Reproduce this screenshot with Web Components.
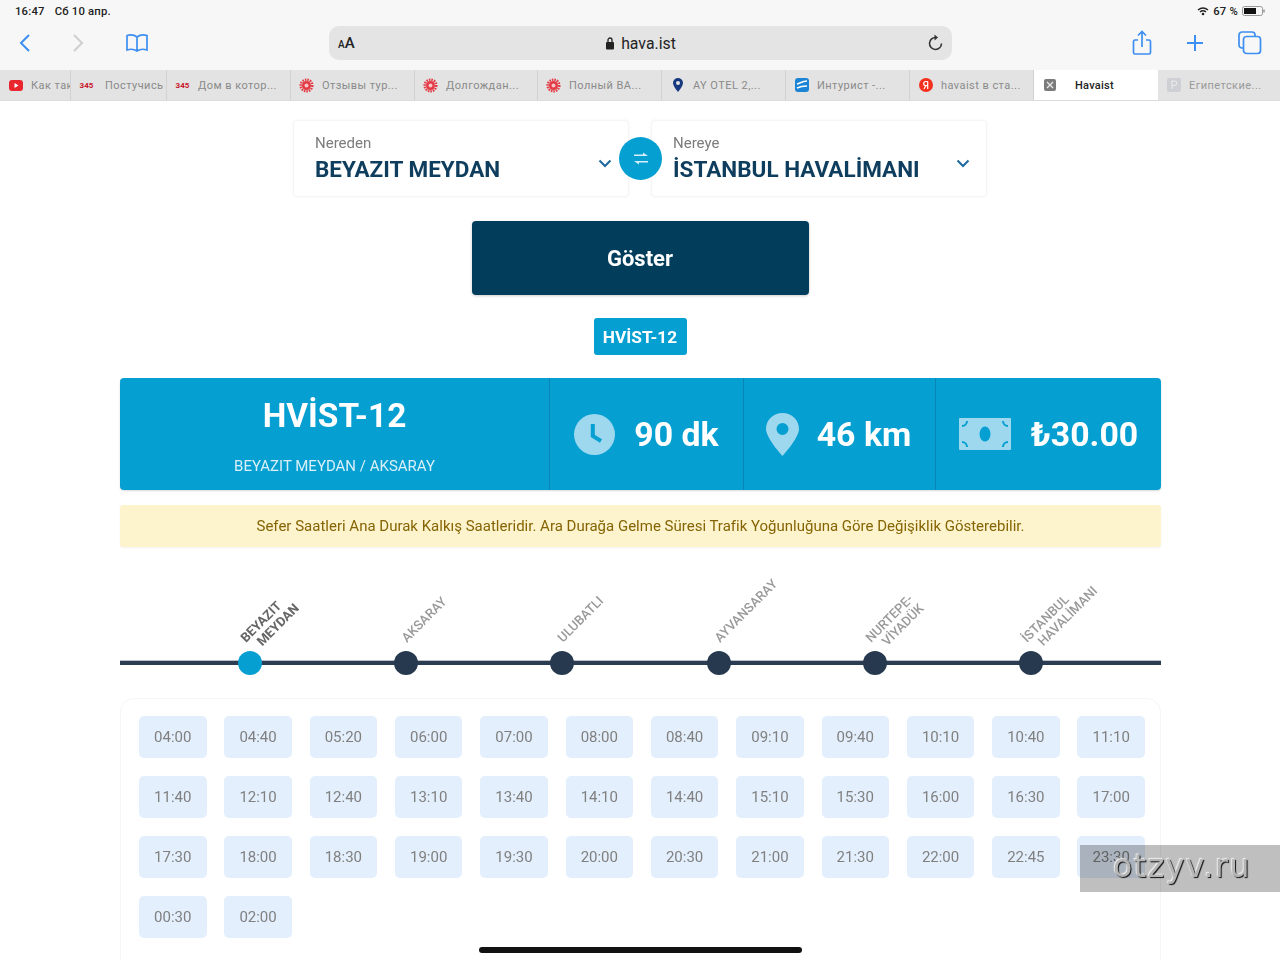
<!doctype html>
<html lang="tr"><head><meta charset="utf-8"><title>Havaist</title>
<style>
html,body{margin:0;height:960px;overflow:hidden;background:#fff;font-family:Roboto,"Liberation Sans",sans-serif}
body{display:block;position:relative}
.page{filter:blur(.76px);height:960px;overflow:hidden}
.wm{position:absolute;left:1080px;top:845px}
</style></head><body>
<div class="page">
<browser-chrome></browser-chrome>
<route-form></route-form>
<route-banner></route-banner>
<stop-line></stop-line>
<time-grid></time-grid>
<home-bar></home-bar>
</div>
<water-mark class="wm">otzyv.ru</water-mark>
<script>
const def=(name,html,init)=>customElements.define(name,class extends HTMLElement{
  constructor(){super();this.attachShadow({mode:'open'}).innerHTML=html;}
  connectedCallback(){init&&init(this.shadowRoot,this);}
});
const BLUE='#3d8ff2';
def('browser-tab',`<style>
:host{display:flex;align-items:center;box-sizing:border-box;height:30px;border-right:1px solid #d2d2d2;background:#e3e3e3;color:#8a8a8a;font-size:11px;letter-spacing:.45px;padding-left:8px;gap:8px;overflow:hidden;white-space:nowrap;flex:0 0 auto}
:host([active]){background:#fff;color:#222;font-weight:500;border-right:0;gap:18px;letter-spacing:.25px}
:host([last]){border-right:0;color:#999}
.i{width:15px;height:15px;flex:0 0 15px;display:flex;align-items:center;justify-content:center}
</style><span class="i"><slot name="icon"></slot></span><slot></slot>`);
def('browser-chrome',`<style>
:host{display:block;background:#f7f7f7;height:101px;color:#222}
.st{height:22px;display:flex;justify-content:space-between;align-items:center;font-size:11.300px;font-weight:500;padding:0 13px 0 15px;letter-spacing:.2px}
.st div{display:flex;align-items:center;gap:10px}.r{gap:4px!important}
.tb{height:42px;margin-bottom:6px;position:relative;display:flex;align-items:center}
.left{display:flex;align-items:center;width:329px;box-sizing:border-box;padding-left:18px;gap:39px}
.url{width:623px;height:34px;background:#e4e4e4;border-radius:10px;display:grid;grid-template-columns:1fr auto 1fr;align-items:center;box-sizing:border-box;padding:0 8px;font-size:15.800px}
.url .aa{font-size:15px;font-weight:500;margin-left:1px}.url .aa small{font-size:10px}
.url .mid{display:flex;align-items:center;gap:6px;margin-left:0}
.url svg.re{justify-self:end}
.right{display:flex;align-items:center;margin-left:180px}
.tabs{display:flex;height:31px;border-bottom:1px solid #dcdcdc;box-sizing:border-box}
.t345{color:#c8152a;font:700 8px Roboto,sans-serif;letter-spacing:0}
</style>
<div class="st"><div><span>16:47</span><span>Сб 10 апр.</span></div>
<div class="r"><svg width="12" height="10" viewBox="0 0 12 10"><path d="M1 4q5-4 10 0M3 6q3-2.500 6 0" fill="none" stroke="#222" stroke-width="1.500"/><circle cx="6" cy="8" r="1.300" fill="#222"/></svg><span>67 %</span>
<svg width="25" height="12" viewBox="0 0 25 12"><rect x=".5" y="1.500" width="20" height="9" rx="2" fill="none" stroke="#999"/><rect x="2" y="3" width="12" height="6" fill="#111"/><path d="M22 4.500v3" stroke="#999" stroke-width="1.500"/></svg></div></div>
<div class="tb"><div class="left">
<svg width="14" height="20" viewBox="0 0 14 20"><path d="M11 2 3 10l8 8" fill="none" stroke="${BLUE}" stroke-width="2"/></svg>
<svg width="14" height="20" viewBox="0 0 14 20"><path d="M3 2l8 8-8 8" fill="none" stroke="#cfcfcf" stroke-width="2"/></svg>
<svg width="24" height="20" viewBox="0 0 24 20" style="margin-left:1px"><path d="M12 4C9 1.500 5 1.500 2 2.500V17c3-1 7-1 10 1 3-2 7-2 10-1V2.500C19 1.500 15 1.500 12 4zM12 4v14" fill="none" stroke="${BLUE}" stroke-width="1.700"/></svg></div>
<div class="url"><span class="aa"><small>A</small>A</span><span class="mid"><svg width="10" height="13" viewBox="0 0 10 13"><rect x="1" y="5" width="8" height="7.500" rx="1" fill="#222"/><path d="M3 5V3a2 2 0 0 1 4 0v2" fill="none" stroke="#222" stroke-width="1.300"/></svg>hava.ist</span>
<svg class="re" width="16" height="18" viewBox="0 0 16 18" style="margin-right:1px"><path d="M9 3.500a6 6 0 1 0 5.500 6" fill="none" stroke="#333" stroke-width="1.600"/><path d="M7.500 .5 11 3.500 7.500 6.500z" fill="#333"/></svg></div>
<div class="right">
<svg width="20" height="26" viewBox="0 0 20 26"><path d="M6 10H3a1.500 1.500 0 0 0-1.500 1.500v11A1.500 1.500 0 0 0 3 24h14a1.500 1.500 0 0 0 1.500-1.500v-11A1.500 1.500 0 0 0 17 10h-3M10 17V2M6 5.500 10 1.500l4 4" fill="none" stroke="${BLUE}" stroke-width="1.700"/></svg>
<svg width="18" height="18" viewBox="0 0 18 18" style="margin-left:34px"><path d="M9 1v16M1 9h16" stroke="${BLUE}" stroke-width="2"/></svg>
<svg width="24" height="24" viewBox="0 0 24 24" style="margin-left:34px"><rect x="1" y="1" width="16" height="16" rx="3" fill="none" stroke="${BLUE}" stroke-width="1.700"/><rect x="5.500" y="5.500" width="17" height="17" rx="3" fill="#f7f7f7" stroke="${BLUE}" stroke-width="1.700"/></svg>
</div></div>
<div class="tabs">
<browser-tab style="width:71px"><svg slot="icon" width="14" height="11" viewBox="0 0 14 11"><rect width="14" height="11" rx="3" fill="#e8262d"/><path d="M5.500 3v5l4-2.500z" fill="#fff"/></svg>Как так</browser-tab>
<browser-tab style="width:96px"><span slot="icon" class="t345">345</span><span style="margin-left:3px">Постучись</span></browser-tab>
<browser-tab style="width:124px"><span slot="icon" class="t345">345</span>Дом в котор...</browser-tab>
<browser-tab style="width:124px"><gear-icon slot="icon"></gear-icon>Отзывы тур...</browser-tab>
<browser-tab style="width:123px"><gear-icon slot="icon"></gear-icon>Долгождан...</browser-tab>
<browser-tab style="width:124px"><gear-icon slot="icon"></gear-icon>Полный ВА...</browser-tab>
<browser-tab style="width:124px"><svg slot="icon" width="10" height="14" viewBox="0 0 10 14"><path d="M5 0a5 5 0 0 1 5 5c0 3-5 9-5 9S0 8 0 5a5 5 0 0 1 5-5z" fill="#17397f"/><circle cx="5" cy="5" r="2" fill="#e3e3e3"/></svg>AY OTEL 2,...</browser-tab>
<browser-tab style="width:124px"><svg slot="icon" width="14" height="14" viewBox="0 0 14 14"><rect width="14" height="14" rx="3" fill="#1c84d4"/><path d="M2 6c3-1 6-3 10-3M2 10c4-2 6-2 10-2" stroke="#fff" stroke-width="1.500" fill="none"/></svg>Интурист -...</browser-tab>
<browser-tab style="width:124px"><svg slot="icon" width="14" height="14" viewBox="0 0 14 14"><circle cx="7" cy="7" r="7" fill="#f4301f"/><path d="M8.700 3.500H6.800a2 2 0 0 0 0 4.200h1.900M8.700 3.500v7.500M6.800 7.700 5 11" stroke="#fff" stroke-width="1.200" fill="none"/></svg>havaist в ста...</browser-tab>
<browser-tab active style="width:124px"><svg slot="icon" width="12" height="12" viewBox="0 0 12 12"><rect width="12" height="12" rx="2" fill="#7b7b7b"/><path d="M3 3l6 6M9 3l-6 6" stroke="#e8e8e8" stroke-width="1.300"/></svg>Havaist</browser-tab>
<browser-tab last style="width:122px"><svg slot="icon" width="14" height="14" viewBox="0 0 14 14"><rect width="14" height="14" rx="2" fill="#cfd0d6"/><path d="M5 11V3h2.500a2 2 0 0 1 0 4.500H5" stroke="#eee" fill="none"/></svg>Египетские...</browser-tab>
</div>`);
def('gear-icon',`<style>:host{display:flex}</style><svg width="15" height="15" viewBox="0 0 15 15"><circle cx="7.500" cy="7.500" r="5.800" fill="none" stroke="#e33a45" stroke-width="2.500" stroke-dasharray="1.500 1"/><circle cx="7.500" cy="7.500" r="4.500" fill="#e33a45"/><circle cx="7.500" cy="7.500" r="2" fill="#f6c5c8"/></svg>`);
def('place-select',`<style>
:host{display:block;box-sizing:border-box;width:336px;height:77px;background:#fff;border:1px solid #f5f5f5;border-radius:4px;box-shadow:0 0 3px rgba(0,0,0,.05);padding:14px 21px;position:relative}
.l{font-size:15px;line-height:17px;color:#7c7c7c}
.v{font-size:22.500px;font-weight:700;line-height:32px;color:#0e3d5e;margin-top:1px;white-space:nowrap}
svg{position:absolute;right:16px;top:38px}
</style><div class="l"><slot name="label"></slot></div><div class="v"><slot></slot></div>
<svg width="14" height="9" viewBox="0 0 14 9"><path d="M1.500 1.500 7 7l5.500-5.500" fill="none" stroke="#1c6aa0" stroke-width="2"/></svg>`);
def('route-form',`<style>
:host{display:block;padding-top:19px}
.row{display:flex;justify-content:center;gap:22px;position:relative;width:694px;margin:0 auto}
.swap{position:absolute;left:326px;top:17px;width:43px;height:43px;border-radius:50%;background:#059fd2;display:flex;align-items:center;justify-content:center}
.go{display:flex;align-items:center;justify-content:center;width:337px;height:74px;margin:24px auto 0;background:#023e5c;border-radius:4px;color:#fff;font-size:22px;font-weight:700;box-shadow:0 1px 3px rgba(0,0,0,.2)}
.chip{display:flex;align-items:center;justify-content:center;width:93px;height:37px;margin:23px auto 0;background:#059fd2;border-radius:3px;color:#fff;font-size:17.300px;font-weight:700}
</style>
<div class="row"><place-select><span slot="label">Nereden</span>BEYAZIT MEYDAN</place-select><place-select><span slot="label">Nereye</span>İSTANBUL HAVALİMANI</place-select>
<div class="swap"><svg width="16" height="13" viewBox="0 0 16 13"><path d="M1 2.500h9V.5l5 3.500H1zM15 10.500H6v2L1 9h14z" fill="#d7eff8"/></svg></div></div>
<div class="go">Göster</div><div class="chip">HVİST-12</div>`);
def('route-banner',`<style>
:host{display:block;margin:23px 119px 0 120px}
.b{display:grid;grid-template-columns:429px 194px 192px 1fr;height:112px;background:#059fd2;border-radius:4px;color:#fff;box-shadow:0 1px 2px rgba(0,0,0,.15)}
.b>div{display:flex;align-items:center;justify-content:center;border-left:1px solid #0b84b8;font-size:33.800px;font-weight:700;gap:20px}
.b>div:first-child{border-left:0;flex-direction:column;justify-content:flex-start;gap:0}
.h{font-size:33.400px;line-height:42px;margin-top:17px}.s{font-size:15px;font-weight:400;line-height:17px;margin-top:21px;color:#d9f0f8}
.alert{display:flex;align-items:center;justify-content:center;height:42px;margin-top:15px;background:#fdf3cd;border-radius:3px;color:#856404;font-size:15px;box-shadow:0 1px 2px rgba(0,0,0,.05)}
</style>
<div class="b"><div><span class="h">HVİST-12</span><span class="s">BEYAZIT MEYDAN / AKSARAY</span></div>
<div><svg width="41" height="41" viewBox="0 0 41 41"><circle cx="20.500" cy="20.500" r="20.500" fill="#9ed8ee"/><path d="M18.800 10v12l8.200 5" fill="none" stroke="#059fd2" stroke-width="4"/></svg><span style="margin-left:-1px">90 dk</span></div>
<div><svg width="33" height="43" viewBox="0 0 33 43"><path fill-rule="evenodd" d="M16.500 0C26 0 33 7 33 16c0 9-16.500 27-16.500 27S0 25 0 16C0 7 7 0 16.500 0zm0 10a6 6 0 1 0 0 12 6 6 0 0 0 0-12z" fill="#9ed8ee"/></svg><span style="margin:0 2px 0 -2px">46 km</span></div>
<div><svg width="52" height="32" viewBox="0 0 52 32"><rect width="52" height="32" rx="1" fill="#9ed8ee"/><ellipse cx="26" cy="16" rx="5.500" ry="7.500" fill="#059fd2"/><path d="M3 8a5 5 0 0 0 5-5M44 3a5 5 0 0 0 5 5M3 24a5 5 0 0 1 5 5M49 24a5 5 0 0 0-5 5" fill="none" stroke="#059fd2" stroke-width="2"/></svg><span>₺30.00</span></div></div>
<div class="alert">Sefer Saatleri Ana Durak Kalkış Saatleridir. Ara Durağa Gelme Süresi Trafik Yoğunluğuna Göre Değişiklik Gösterebilir.</div>`);
def('bus-stop',`<style>
:host{display:block;position:relative;height:24px;display:flex;justify-content:center}
.d{width:24px;height:24px;border-radius:50%;background:#26394f}
:host([current]) .d{background:#059fd2}
.t{position:absolute;left:calc(50% + 3px);bottom:30px;transform-origin:left bottom;transform:rotate(-45deg);font-size:13px;line-height:14px;font-weight:500;color:#999;white-space:nowrap}
:host([current]) .t{color:#666;font-weight:700}
:host([two]) .t{left:calc(50% + 8px);bottom:20px}
::slotted(span){display:block}
::slotted(span:last-child){margin-left:9px}
</style><div class="t"><slot></slot></div><div class="d"></div>`);
def('stop-line',`<style>
:host{display:block;margin:104px 119px 0 120px;position:relative;height:24px}
.line{position:absolute;left:0;right:0;top:9px;height:5px;background:linear-gradient(#b9c0c8 0 1px,#2a3d52 1px)}
.s{position:relative;display:grid;grid-template-columns:repeat(6,1fr);padding:0 52px}
</style><div class="line"></div><div class="s">
<bus-stop current two><span>BEYAZIT</span><span>MEYDAN</span></bus-stop>
<bus-stop>AKSARAY</bus-stop><bus-stop>ULUBATLI</bus-stop><bus-stop>AYVANSARAY</bus-stop>
<bus-stop two><span>NURTEPE-</span><span>VİYADÜK</span></bus-stop>
<bus-stop two><span>İSTANBUL</span><span>HAVALİMANI</span></bus-stop></div>`);
def('time-grid',`<style>
:host{display:block;margin:23px 119px 0 120px;box-sizing:border-box;height:290px;border:1px solid #f4f5f7;border-radius:14px;padding:17px 15px 0 18px}
.g{display:grid;grid-template-columns:repeat(12,67.500px);justify-content:space-between;row-gap:18px}
.g span{display:flex;align-items:center;justify-content:center;height:42px;background:#e3effc;border-radius:5px;color:#808080;font-size:15px}
</style><div class="g"></div>`,(r)=>{
 r.querySelector('.g').innerHTML="04:00 04:40 05:20 06:00 07:00 08:00 08:40 09:10 09:40 10:10 10:40 11:10 11:40 12:10 12:40 13:10 13:40 14:10 14:40 15:10 15:30 16:00 16:30 17:00 17:30 18:00 18:30 19:00 19:30 20:00 20:30 21:00 21:30 22:00 22:45 23:30 00:30 02:00".split(' ').map(t=>`<span>${t}</span>`).join('');
});
def('home-bar',`<style>:host{display:block;position:absolute;left:479px;top:947px;width:323px;height:6px;border-radius:3px;background:#111}</style>`);
def('water-mark',`<style>:host{display:flex;align-items:center;justify-content:flex-end;box-sizing:border-box;width:200px;height:47px;padding:0 29px 6px 0;background:rgba(0,0,0,.25);font:31.500px "DejaVu Sans",sans-serif;letter-spacing:1.500px;color:#b5b5b5;text-shadow:1px 1px 1px #111,-1px -1px 1px #eee}</style><slot></slot>`);
</script></body></html>
